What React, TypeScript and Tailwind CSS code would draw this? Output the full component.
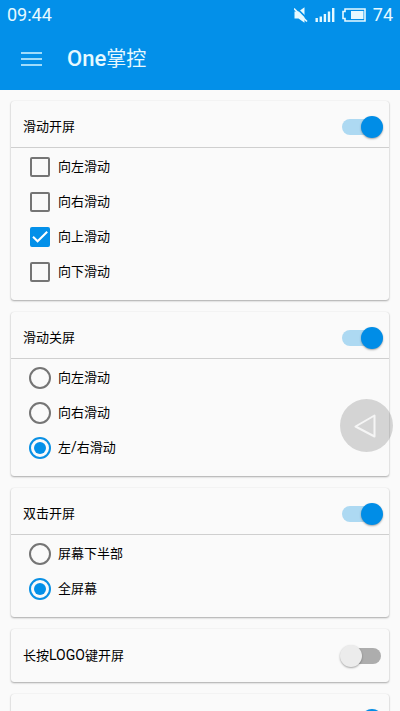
import React, { useState } from 'react';

interface Option {
  id: string;
  label: React.ReactNode;
}

interface CardProps {
  name: string;
  title?: React.ReactNode;
  type?: 'checkbox' | 'radio';
  options?: Option[];
  initial?: string;
  enabled?: boolean;
}

const Latin = ({ children }: { children: React.ReactNode }) => (
  <span className="text-sm leading-6">{children}</span>
);

const Switch = ({ id, label, enabled }: { id: string; label?: string; enabled: boolean }) => {
  const [on, setOn] = useState(enabled);

  return (
    <span className="relative flex h-6 w-[43px] items-center px-0.5">
      <input
        type="checkbox"
        role="switch"
        id={id}
        aria-label={label}
        checked={on}
        onChange={() => setOn(!on)}
        className="peer h-4 w-full appearance-none rounded-full bg-[#adadad] checked:bg-[#add9f2]"
      />
      <span className="pointer-events-none absolute left-0 size-[22px] rounded-full bg-[#ececec] shadow-[0_1px_2px_rgba(0,0,0,0.35)] peer-checked:right-0 peer-checked:left-auto peer-checked:bg-[#008de7]" />
    </span>
  );
};

const Card = ({ name, title, type = 'checkbox', options = [], initial, enabled = true }: CardProps) => {
  const [selected, setSelected] = useState<string[]>(initial ? [initial] : []);

  const handleChange = (id: string) => {
    if (type === 'radio') {
      setSelected([id]);
    } else if (selected.includes(id)) {
      setSelected(selected.filter((s) => s !== id));
    } else {
      setSelected([...selected, id]);
    }
  };

  const hasOptions = options.length > 0;

  return (
    <section className="rounded-[3px] bg-[#fafafa] shadow-[0_1px_2px_rgba(0,0,0,0.32),0_0_1px_rgba(0,0,0,0.12)]">
      <div
        className={`flex items-center justify-between pt-3.5 pr-1.5 pl-3 ${
          hasOptions ? 'border-b border-[#cfcfcf] pb-2' : 'pb-3.5'
        }`}
      >
        <label htmlFor={name} className="leading-6">
          {title}
        </label>
        <Switch id={name} label={title ? undefined : name} enabled={enabled} />
      </div>
      {hasOptions && (
        <div className="pt-px pb-[11px]">
          {options.map((option) => (
            <label key={option.id} className="flex h-[35px] items-center gap-[7px] pl-[18px] leading-6">
              <span className="relative flex size-[22px] items-center justify-center">
                <input
                  type={type}
                  name={`${name}-option`}
                  checked={selected.includes(option.id)}
                  onChange={() => handleChange(option.id)}
                  className={
                    type === 'radio'
                      ? 'peer size-[22px] appearance-none rounded-full border-2 border-[#757575] checked:border-[#0a90e4]'
                      : 'peer size-5 appearance-none rounded-[2px] border-2 border-[#757575] checked:border-[#0390e9] checked:bg-[#0390e9]'
                  }
                />
                {type === 'radio' ? (
                  <span className="pointer-events-none absolute hidden size-3 rounded-full bg-[#0390e9] peer-checked:block" />
                ) : (
                  <svg
                    viewBox="0 0 20 20"
                    className="pointer-events-none absolute hidden size-5 fill-none stroke-white stroke-2 peer-checked:block"
                  >
                    <path d="M3 9.7 L7.6 14.3 L17.2 4.7" />
                  </svg>
                )}
              </span>
              <span>{option.label}</span>
            </label>
          ))}
        </div>
      )}
    </section>
  );
};

const StatusBar = () => (
  <div className="flex h-7 items-center justify-between px-[7px] pt-0.5 text-lg leading-6">
    <span>09:44</span>
    <div className="flex items-center gap-[7px]">
      <svg viewBox="0 0 14 16" className="h-4 w-3.5" fill="currentColor">
        <path d="M0.5 4.5 H4.5 L10.5 0.3 V15.7 L4.5 11.5 H0.5 Z" />
        <path d="M1 -0.5 L15 13.5" stroke="#0390e9" strokeWidth="1.6" />
        <path d="M0 1.5 L13 14.5" stroke="currentColor" strokeWidth="1.6" />
      </svg>
      <svg viewBox="0 0 20 14" className="h-3.5 w-5" fill="currentColor">
        <path d="M0.5 10h2.4v4h-2.4z M4.6 8.5h2.4v5.5h-2.4z M8.7 6h2.4v8h-2.4z M12.8 3.5h2.4v10.5h-2.4z M17 0h2.4v14h-2.4z" />
      </svg>
      <svg viewBox="0 0 24 14" className="h-3.5 w-6" fill="currentColor">
        <path d="M3 1 H23 V13 H3 V10.5 H1 V3.5 H3 Z" fill="none" stroke="currentColor" strokeWidth="1.6" />
        <path d="M9 3h12.5v8h-12.5z" />
      </svg>
      <span>74</span>
    </div>
  </div>
);

const App = () => {
  return (
    <div className="relative h-screen overflow-hidden bg-[#fafafa] font-['Roboto','Noto_Sans_CJK_SC',sans-serif] text-[13px] text-black">
      <header className="bg-[#0390e9] text-[#e6f9ff]">
        <StatusBar />
        <div className="flex h-[62px] items-center gap-[25px] pl-[21px]">
          <button type="button" aria-label="菜单" className="flex w-[21px] flex-col gap-1">
            <span className="h-0.5 bg-[#9fdcfb]" />
            <span className="h-0.5 bg-[#9fdcfb]" />
            <span className="h-0.5 bg-[#9fdcfb]" />
          </button>
          <h1 className="text-xl leading-8">
            <span className="text-[22px] font-medium">One</span>
            掌控
          </h1>
        </div>
      </header>

      <main className="flex flex-col gap-3 p-[11px]">
        <Card
          name="slide-on"
          title="滑动开屏"
          options={[
            { id: 'left', label: '向左滑动' },
            { id: 'right', label: '向右滑动' },
            { id: 'up', label: '向上滑动' },
            { id: 'down', label: '向下滑动' },
          ]}
          initial="up"
        />
        <Card
          name="slide-off"
          title="滑动关屏"
          type="radio"
          options={[
            { id: 'left', label: '向左滑动' },
            { id: 'right', label: '向右滑动' },
            { id: 'both', label: <>左<Latin>/</Latin>右滑动</> },
          ]}
          initial="both"
        />
        <Card
          name="double-tap"
          title="双击开屏"
          type="radio"
          options={[
            { id: 'lower', label: '屏幕下半部' },
            { id: 'full', label: '全屏幕' },
          ]}
          initial="full"
        />
        <Card name="long-press" title={<>长按<Latin>LOGO</Latin>键开屏</>} enabled={false} />
        <Card name="more" />
      </main>

      {/* floating back button */}
      <button
        type="button"
        aria-label="返回"
        className="absolute top-[399px] right-[7px] flex size-[53px] items-center justify-center rounded-full bg-black/15"
      >
        <svg viewBox="0 0 24 26" className="mr-1 h-[26px] w-6 fill-none stroke-[#f5f5f5] stroke-2">
          <path d="M2.5 13.5 L21.5 2.5 V23.5 Z" strokeLinejoin="round" />
        </svg>
      </button>
    </div>
  );
};

export default App;
